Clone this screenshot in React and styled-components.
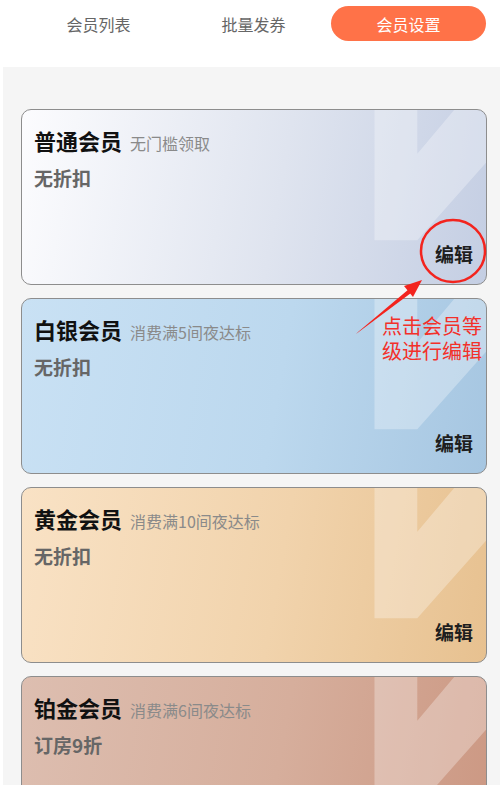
import React from 'react'
import styled, { createGlobalStyle } from 'styled-components'

const GlobalStyle = createGlobalStyle`
  html, body {
    margin: 0;
    padding: 0;
    background: #ffffff;
    font-family: "Noto Sans CJK SC", "Noto Sans", sans-serif;
  }
  * { box-sizing: border-box; }
`

const levels = [
  { name: '普通会员', cond: '无门槛领取', discount: '无折扣', from: '#fcfcfe', mid: '#dfe4ef', to: '#c4cee3' },
  { name: '白银会员', cond: '消费满5间夜达标', discount: '无折扣', from: '#c9e1f4', mid: '#bcd8ee', to: '#a6c6e1' },
  { name: '黄金会员', cond: '消费满10间夜达标', discount: '无折扣', from: '#f9e2c5', mid: '#f1d3ac', to: '#e7c190' },
  { name: '铂金会员', cond: '消费满6间夜达标', discount: '订房9折', from: '#ddbeb0', mid: '#d6ae9c', to: '#cc9883' },
]

function App() {
  return (
    <Page>
      <GlobalStyle />
      <TabBar>
        <Tab>会员列表</Tab>
        <Tab>批量发券</Tab>
        <Tab $active>会员设置</Tab>
      </TabBar>
      <Content>
        {levels.map((lv, i) => (
          <Card key={lv.name} $from={lv.from} $mid={lv.mid} $to={lv.to}>
            <Deco viewBox="0 0 466 175" preserveAspectRatio="none">
              <polygon points="354,0 397,0 397,44 434,0 466,0 466,53 397,131 354,131" fill="#ffffff" fillOpacity="0.3" />
            </Deco>
            <TitleRow>
              <Title>{lv.name}</Title>
              <Cond>{lv.cond}</Cond>
            </TitleRow>
            <Discount>{lv.discount}</Discount>
            {i < levels.length - 1 && <EditBtn>编辑</EditBtn>}
          </Card>
        ))}
      </Content>
      <Marks width="503" height="790" viewBox="0 0 503 790">
        <ellipse cx="453" cy="251" rx="32" ry="31" fill="none" stroke="#f3241e" strokeWidth="2.5" />
        <polygon points="356,334 358,332 409,289 411,293" fill="#f3241e" />
        <polygon points="422,280 413,297 404,286" fill="#f3241e" />
      </Marks>
      <Hint>点击会员等<br />级进行编辑</Hint>
    </Page>
  )
}

export default App

const Page = styled.div`
  position: relative;
  width: 503px;
  height: 790px;
  overflow: hidden;
  background: #ffffff;
`
const TabBar = styled.div`
  display: grid;
  grid-template-columns: repeat(3, 155px);
  padding: 6px 0 0 21px;
  height: 67px;
`
const Tab = styled.div`
  display: flex;
  align-items: center;
  justify-content: center;
  height: 35px;
  border-radius: 18px;
  font-size: 16px;
  color: ${(p) => (p.$active ? '#ffffff' : '#666666')};
  background: ${(p) => (p.$active ? '#ff7248' : 'transparent')};
`
const Content = styled.div`
  display: flex;
  flex-direction: column;
  gap: 13px;
  margin: 0 3px;
  height: 718px;
  overflow: hidden;
  padding: 42px 13px 0 18px;
  background: #f5f5f5;
`
const Card = styled.div`
  position: relative;
  flex-shrink: 0;
  display: flex;
  flex-direction: column;
  align-items: flex-start;
  height: 176px;
  padding: 14px 13px 17px 12px;
  border: 1px solid #8d8d8d;
  border-radius: 10px;
  overflow: hidden;
  background: linear-gradient(100deg, ${(p) => p.$from} 0%, ${(p) => p.$mid} 55%, ${(p) => p.$to} 100%);
`
const Deco = styled.svg`
  position: absolute;
  top: 0;
  left: 0;
  width: 100%;
  height: 100%;
`
const TitleRow = styled.div`
  position: relative;
  display: flex;
  align-items: baseline;
  gap: 8px;
`
const Title = styled.span`
  font-size: 22px;
  font-weight: 700;
  color: #111111;
`
const Cond = styled.span`
  font-size: 16px;
  color: #8a8a8a;
`
const Discount = styled.div`
  position: relative;
  margin-top: 8px;
  font-size: 19px;
  font-weight: 700;
  color: #666666;
`
const EditBtn = styled.div`
  position: relative;
  margin-top: auto;
  align-self: flex-end;
  font-size: 19px;
  font-weight: 700;
  color: #1e1e1e;
`
const Marks = styled.svg`
  position: absolute;
  top: 0;
  left: 0;
  pointer-events: none;
`
const Hint = styled.div`
  position: absolute;
  top: 313px;
  right: 21px;
  font-size: 20px;
  line-height: 25px;
  color: #f3302a;
  text-align: right;
`
